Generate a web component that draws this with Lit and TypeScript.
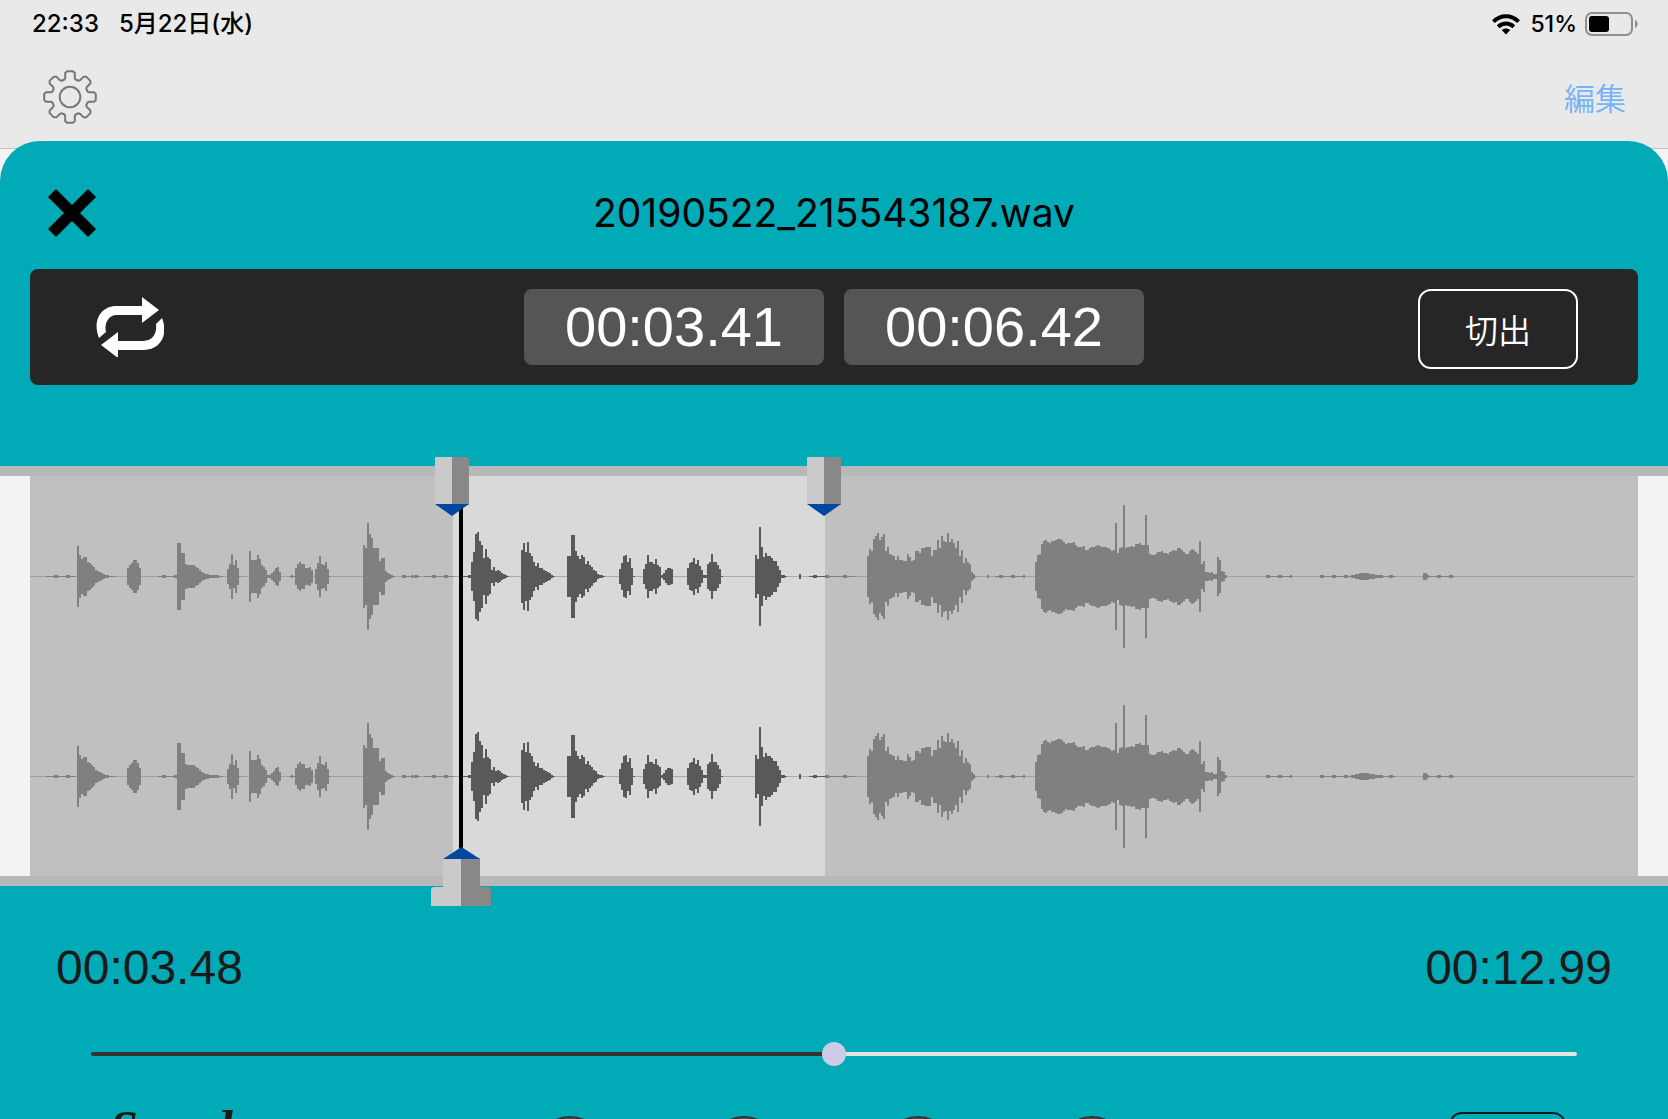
import { LitElement, html, css, svg } from "lit";
import { customElement, property, state } from "lit/decorators.js";

/* Bursts of sound: start of the burst, then one half-height for every two units. */
const BURSTS: Array<[number, number[]]> = [
  [47, [31, 22, 18, 20, 20, 15, 14, 12, 10, 7, 6, 5, 4, 3, 2, 2, 1, 1, 1]],
  [97, [9, 12, 14, 17, 17, 14, 9]],
  [147, [34, 34, 24, 24, 13, 12, 12, 12, 12, 10, 9, 7, 5, 4, 3, 3, 2, 2, 2, 2, 2, 1, 1]],
  [197, [8, 13, 23, 12, 17, 9, 1]],
  [219, [26, 17, 17, 17, 22, 18, 12, 10, 7, 2, 2, 4, 6, 9, 10, 5]],
  [259, [1, 2, 1]],
  [265, [9, 13, 15, 13, 13, 9, 9, 10, 7]],
  [285, [8, 14, 21, 13, 12, 15, 8, 1]],
  [333, [32, 29, 54, 43, 39, 29, 29, 29, 16, 19, 19, 6, 4, 3, 2, 1]],
  [381, [2, 1]],
  [441, [15, 25, 43, 45, 36, 32, 19, 28, 20, 18, 7, 10, 6, 7, 6, 4, 3, 2, 1]],
  [491, [27, 34, 25, 35, 24, 21, 15, 11, 14, 9, 9, 7, 6, 5, 4, 2, 1]],
  [537, [21, 21, 42, 42, 26, 21, 18, 22, 20, 13, 16, 12, 10, 7, 6, 3, 2, 2, 1]],
  [589, [8, 14, 21, 22, 15, 19, 9, 1]],
  [613, [8, 13, 22, 15, 15, 13, 18, 12, 10, 2, 4, 7, 9, 9, 8]],
  [657, [9, 14, 15, 19, 13, 17, 11, 7, 2, 2, 13, 15, 23, 15, 15, 12, 8, 1]],
  [725, [22, 18, 50, 30, 20, 24, 21, 21, 19, 16, 16, 11, 7, 2, 2, 1]],
  [769, [3]],
  [837, [21, 28, 26, 38, 41, 44, 37, 40, 43, 26, 30, 23, 22, 21, 17, 21, 17, 17, 16, 16, 23, 20, 16, 17, 26, 26, 24, 29, 29, 30, 30, 30, 21, 27, 27, 37, 29, 41, 36, 35, 44, 35, 38, 34, 29, 36, 21, 27, 14, 19, 15, 13, 5, 3, 1]],
  [957, [2]],
  [1005, [15, 22, 23, 33, 36, 37, 35, 34, 36, 36, 37, 38, 38, 37, 35, 33, 34, 34, 34, 35, 32, 30, 30, 30, 31, 27, 27, 29, 30, 30, 31, 32, 31, 30, 30, 30, 29, 28, 26, 27, 54, 24, 29, 30, 72, 29, 30, 30, 31, 30, 33, 33, 34, 32, 32, 62, 32, 23, 22, 22, 23, 25, 25, 26, 24, 24, 23, 25, 26, 27, 26, 29, 29, 27, 25, 23, 23, 26, 28, 27, 25, 23, 36, 13, 16, 5, 5, 4, 5, 3, 3, 20, 17, 6, 5, 2]],
  [1317, [1, 1, 2, 2, 3, 3, 4, 4, 4, 4, 4, 3, 3, 3, 2, 2, 2, 2, 1, 1]],
  [1393, [4, 4, 2]],
];

/* Stretches of faint noise: start and end. */
const NOISE: Array<[number, number]> = [
  [16, 46], [128, 147], [372, 390], [394, 424], [430, 441], [779, 805],
  [805, 825], [965, 995], [1236, 1262], [1290, 1319], [1355, 1366], [1399, 1424],
];

const SPAN = 1608;
const CENTRES = [100, 300];

@customElement("wave-view")
export class WaveView extends LitElement {
  @property({ type: Number }) from = 0;
  @property({ type: Number }) to = 0;

  static styles = css`
    :host { display: block; height: 400px; }
    .wave { display: block; width: 100%; height: 100%; }
    .ground { fill: #c0c0c0; }
    .selection { fill: #d9d9d9; }
    .outside { fill: #808080; }
    .inside { fill: #595959; }
    .axis { fill: #808080; opacity: 0.5; }
  `;

  private bars(selected: boolean) {
    let d = "";
    const add = (x: number, w: number, h: number) => {
      if ((x >= this.from && x < this.to) !== selected) return;
      for (const c of CENTRES) d += `M${x} ${c - h + 1}h${w}v${2 * h - 1}h${-w}z`;
    };
    for (const [start, heights] of BURSTS) heights.forEach((h, i) => add(start + i * 2, 2, h));
    for (const [a, b] of NOISE) {
      for (let x = a; x < b; x += 4) add(x, Math.min(4, b - x), x % 3 === 0 ? 2 : 1);
    }
    return d;
  }

  render() {
    return html`<svg class="wave" viewBox="0 0 ${SPAN} 400" preserveAspectRatio="none" shape-rendering="crispEdges" aria-hidden="true">
      <rect class="ground" width=${SPAN} height="400"></rect>
      <rect class="selection" x=${this.from} width=${this.to - this.from} height="400"></rect>
      ${CENTRES.map((c) => svg`<rect class="axis" y=${c} width=${SPAN - 4} height="1"></rect>`)}
      <path class="outside" d=${this.bars(false)}></path>
      <path class="inside" d=${this.bars(true)}></path>
    </svg>`;
  }
}

@customElement("app-root")
export class AppRoot extends LitElement {
  @state() private start = 423;
  @state() private end = 795;
  @state() private head = 431;
  @state() private volume = 50;

  static styles = css`
    :host {
      display: flex;
      flex-direction: column;
      height: 100vh;
      overflow: hidden;
      background: #f4f4f4;
      color: #000;
      font-family: Inter, "Noto Sans CJK JP", sans-serif;
    }
    * { box-sizing: border-box; }
    button { margin: 0; padding: 0; border: 0; background: none; color: inherit; font: inherit; cursor: pointer; }
    svg { display: block; }
    .top {
      flex: none;
      height: 149px;
      background: #e9e9e9;
      border-bottom: 1px solid #c4c4c4;
    }
    .status {
      display: flex;
      align-items: center;
      height: 48px;
      padding: 0 30px 0 32px;
      font-size: 24px;
      line-height: 24px;
      font-weight: 500;
    }
    .date { margin-left: 20px; }
    .wifi { margin-left: auto; }
    .charge { margin: 0 8px 0 10px; font-size: 23px; }
    .nav { display: flex; align-items: center; justify-content: space-between; height: 100px; padding: 0 42px 2px 40px; }
    .edit { font-family: "Noto Sans CJK JP", sans-serif; font-weight: 350; font-size: 31px; line-height: 48px; color: #77b2f6; }
    .sheet {
      flex: 1 0 auto;
      margin-top: -8px;
      background: #00aab7;
      border-radius: 40px 40px 0 0;
    }
    .head {
      display: grid;
      grid-template-columns: 48px 1fr 48px;
      align-items: center;
      height: 128px;
      padding: 16px 48px 0;
    }
    .title { margin: 0; text-align: center; font-size: 39px; line-height: 48px; font-weight: 400; }
    .tools {
      display: grid;
      grid-template-columns: 1fr auto 1fr;
      align-items: center;
      height: 116px;
      margin: 0 30px 81px;
      padding: 0 60px;
      border-radius: 8px;
      background: #262626;
      color: #fff;
    }
    .repeat { justify-self: start; margin-left: 6px; }
    .marks { display: flex; gap: 20px; }
    .mark {
      width: 300px;
      border-radius: 8px;
      background: #555;
      text-align: center;
      font: 56px/76px "Liberation Sans", sans-serif;
    }
    .cut {
      justify-self: end;
      width: 160px;
      height: 80px;
      margin-top: 4px;
      border: 2px solid #fff;
      border-radius: 13px;
      font-family: "Noto Sans CJK JP", sans-serif;
      font-weight: 350;
      font-size: 33px;
      line-height: 72px;
    }
    .stage { border: solid #b8b8b8; border-width: 10px 0; background: #f3f3f3; padding: 0 30px; }
    .canvas { position: relative; }
    .playhead { position: absolute; top: 0; bottom: 0; width: 4px; margin-left: -2px; background: #000; }
    .handle { position: absolute; transform: translateX(-50%); }
    .upper { top: -19px; }
    .lower { bottom: -30px; }
    .times {
      display: flex;
      justify-content: space-between;
      padding: 54px 56px 0;
      font: 48px/56px "Liberation Sans", sans-serif;
      color: #1a1a1a;
    }
    .seek { padding: 46px 91px 0; }
    .range { display: block; width: 100%; height: 24px; margin: 0; appearance: none; background: none; }
    .range::-webkit-slider-runnable-track {
      height: 4px;
      border-radius: 2px;
      background: linear-gradient(to right, #333 50%, #e4e4e4 50%);
    }
    .range::-webkit-slider-thumb {
      appearance: none;
      width: 24px;
      height: 24px;
      margin-top: -10px;
      border-radius: 50%;
      background: #cccce6;
    }
    .bottom {
      display: grid;
      grid-template-columns: 1fr auto 1fr;
      align-items: start;
      padding: 46px 102px 0;
      height: 130px;
    }
    .speed { padding-left: 8px; font: italic bold 50px/32px "Liberation Serif", serif; color: #1a1a1a; }
    .knobs { display: flex; gap: 106px; padding: 4px 6px 0 0; }
    .knob { width: 68px; height: 68px; border: 2px solid #333; border-radius: 50%; background: #55504f; }
    .option { justify-self: end; width: 117px; height: 60px; border: 2px solid #1a1a1a; border-radius: 13px; }
  `;

  private upperHandle(at: number, label: string) {
    return html`<button class="handle upper" aria-label=${label} style="left:${(at / SPAN) * 100}%">
      <svg width="34" height="60" viewBox="0 0 34 60">
        <path fill="#cacaca" d="M1 0h16v48H0V1z"></path>
        <path fill="#888" d="M17 0h16l1 1v47H17z"></path>
        <path fill="#0047a0" d="M0 47h34L17 59z"></path>
      </svg>
    </button>`;
  }

  render() {
    return html`
      <header class="top">
        <div class="status">
          <span>22:33</span>
          <span class="date">5月22日(水)</span>
          <svg class="wifi" width="28" height="21" viewBox="0 0 28 21" aria-hidden="true">
            <path fill="none" stroke="#000" stroke-width="4" d="M1.400 7.600C8.800.6 19.200.6 26.600 7.600"></path>
            <path fill="none" stroke="#000" stroke-width="4" d="M6.200 12.700c4.600-4.200 11-4.200 15.600 0"></path>
            <path d="M14 20.500l-4.300-4.400c2.600-2.300 6-2.300 8.600 0z"></path>
          </svg>
          <span class="charge">51%</span>
          <svg width="53" height="24" viewBox="0 0 53 24" aria-hidden="true">
            <rect x="1" y="1" width="46" height="22" rx="6" fill="none" stroke="#8f8f8f" stroke-width="2"></rect>
            <rect x="4" y="4" width="20" height="16" rx="3"></rect>
            <path fill="#8f8f8f" d="M50 8c3.500 1.500 3.500 6.500 0 8z"></path>
          </svg>
        </div>
        <nav class="nav">
          <button aria-label="設定">
            <svg width="60" height="54" viewBox="-30 -27 60 54" fill="none" stroke="#777" stroke-width="2" stroke-linejoin="round">
              <circle r="10.300"></circle>
              <path d=${gearPath()}></path>
            </svg>
          </button>
          <button class="edit">編集</button>
        </nav>
      </header>

      <main class="sheet">
        <div class="head">
          <button aria-label="閉じる">
            <svg width="48" height="48" viewBox="0 0 48 48"><path d="M8 0l16 16L40 0l8 8-16 16 16 16-8 8-16-16L8 48l-8-8 16-16L0 8z"></path></svg>
          </button>
          <h1 class="title">20190522_215543187.wav</h1>
        </div>

        <section class="tools">
          <button class="repeat" aria-label="リピート">
            <svg width="68" height="60" viewBox="0 0 68 60" fill="#fff">
              <path d="M20 9h26V0l17 13-17 13v-8H21C12 18 8 27 10 35L3 41C-4 24 5 9 20 9z"></path>
              <path d="M48 53H22v8L5 48l17-13v9h25c11 0 14-9 13-17l6-6c7 17-2 32-18 32z"></path>
            </svg>
          </button>
          <div class="marks">
            <output class="mark">00:03.41</output>
            <output class="mark">00:06.42</output>
          </div>
          <button class="cut">切出</button>
        </section>

        <section class="stage">
          <div class="canvas">
            <wave-view .from=${this.start} .to=${this.end}></wave-view>
            <div class="playhead" style="left:${(this.head / SPAN) * 100}%"></div>
            ${this.upperHandle(this.start - 1, "開始位置")}
            ${this.upperHandle(this.end - 1, "終了位置")}
            <button class="handle lower" aria-label="再生位置" style="left:${(this.head / SPAN) * 100}%">
              <svg width="60" height="59" viewBox="0 0 60 59">
                <path fill="#cacaca" d="M12 11h18v48H0V42l2-2h10z"></path>
                <path fill="#888" d="M30 11h19v29h9l2 2v17H30z"></path>
                <path fill="#0047a0" d="M12 12h37L30.500 0z"></path>
              </svg>
            </button>
          </div>
        </section>

        <div class="times"><span>00:03.48</span><span>00:12.99</span></div>
        <div class="seek">
          <input class="range" type="range" min="0" max="100" aria-label="音量" .value=${String(this.volume)} />
        </div>
        <div class="bottom">
          <span class="speed">Speed</span>
          <div class="knobs">
            ${[1, 2, 3, 4].map((n) => html`<button class="knob" aria-label="速度 ${n}"></button>`)}
          </div>
          <button class="option" aria-label="速度を戻す"></button>
        </div>
      </main>
    `;
  }
}

/* Eight-toothed gear outline centred on the origin. */
function gearPath() {
  const tooth: Array<[number, number]> = [
    [-5.5, -17.5], [-4.8, -19], [-4.8, -24], [-3, -25.8], [3, -25.8], [4.8, -24], [4.8, -19], [5.5, -17.5],
  ];
  const points: string[] = [];
  for (let i = 0; i < 8; i++) {
    const a = (i * Math.PI) / 4;
    for (const [x, y] of tooth) {
      points.push(`${(x * Math.cos(a) - y * Math.sin(a)).toFixed(2)} ${(x * Math.sin(a) + y * Math.cos(a)).toFixed(2)}`);
    }
  }
  return `M${points.join("L")}z`;
}
